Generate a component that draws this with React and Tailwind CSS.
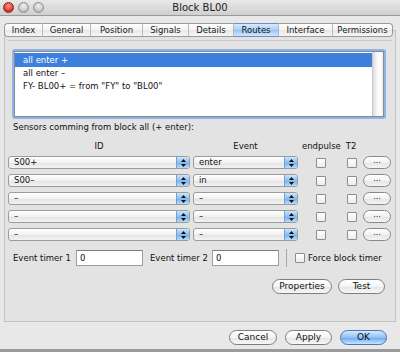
import React from "react";

const font = { fontFamily: '"DejaVu Sans", "Liberation Sans", sans-serif' };

function Arrows() {
  return (
    <svg width="7" height="10" viewBox="0 0 7 10">
      <path d="M1 4 L3.5 1 L6 4 Z" fill="#111" />
      <path d="M1 6 L3.5 9 L6 6 Z" fill="#111" />
    </svg>
  );
}

function Combo({ value, w }) {
  return (
    <div
      className={`${w} h-[13px] flex border border-[#9c9c9c] rounded-[3px] overflow-hidden bg-[linear-gradient(to_bottom,#ffffff,#f1f1f1_50%,#e3e3e3_51%,#f3f3f3)]`}
    >
      <div className="flex-1 flex items-center pl-[5px] text-[8.5px] text-[#111] leading-none">{value}</div>
      <div className="w-[13px] flex items-center justify-center border-l border-[#7d9ccc] bg-[linear-gradient(to_bottom,#cfe5fb,#88c0f3_50%,#6fb1f0_51%,#b8dbfb)]">
        <Arrows />
      </div>
    </div>
  );
}

function Check({ className = "" }) {
  return (
    <div className={`w-[10px] h-[10px] border border-[#8e8e8e] rounded-[1px] bg-[linear-gradient(to_bottom,#ffffff,#ececec)] ${className}`} />
  );
}

function Pill({ children, w, blue = false }) {
  return (
    <div
      className={`${w} h-[15px] rounded-full border flex items-center justify-center text-[9px] leading-none text-[#111] ${
        blue
          ? "border-[#4d73b0] bg-[linear-gradient(to_bottom,#d4e8fc,#8ec2f3_50%,#64a8ee_51%,#c6e4ff)]"
          : "border-[#7e7e7e] bg-[linear-gradient(to_bottom,#ffffff,#f4f4f4_50%,#e6e6e6_51%,#f7f7f7)]"
      }`}
    >
      {children}
    </div>
  );
}

const tabs = ["Index", "General", "Position", "Signals", "Details", "Routes", "Interface", "Permissions"];

const tabW = {
  Index: "w-[39px]",
  General: "w-[48px]",
  Position: "w-[52px]",
  Signals: "w-[46px]",
  Details: "w-[45px]",
  Routes: "w-[45px]",
  Interface: "w-[54px]",
  Permissions: "w-[60px]",
};

const rows = [
  ["S00+", "enter"],
  ["S00–", "in"],
  ["–", "–"],
  ["–", "–"],
  ["–", "–"],
];

export default function App() {
  return (
    <div className="w-[400px] h-[352px] bg-[#e8e8e8] flex flex-col overflow-hidden" style={font}>
      {/* Title bar */}
      <div className="h-[16px] flex items-center border-b border-[#9a9a9a] bg-[linear-gradient(to_bottom,#e9e9e9,#cfcfcf)]">
        <div className="flex items-center gap-[4px] pl-[3px]">
          <div className="w-[11px] h-[11px] rounded-full bg-[radial-gradient(circle_at_50%_35%,#ff9c8c,#e0392b_60%,#a41a10)] border border-[#8c2a22]" />
          <div className="w-[11px] h-[11px] rounded-full bg-[radial-gradient(circle_at_50%_35%,#f2f2f2,#c8c8c8_60%,#9c9c9c)] border border-[#8e8e8e]" />
          <div className="w-[11px] h-[11px] rounded-full bg-[radial-gradient(circle_at_50%_35%,#f2f2f2,#c8c8c8_60%,#9c9c9c)] border border-[#8e8e8e]" />
        </div>
        <div className="flex-1 text-center text-[10px] text-[#222] pr-[44px] leading-none">Block BL00</div>
      </div>

      {/* Tabs */}
      <div className="mt-[7px] h-[14px] pl-[4px] flex relative z-10 -mb-[7px]">
        {tabs.map((t, i) => {
          const sel = t === "Routes";
          return (
            <div
              key={t}
              className={`${tabW[t]} h-[14px] flex items-center justify-center text-[8.5px] leading-none text-[#1a1a1a] border-y border-[#9a9a9a] ${
                i === 0 ? "border-l rounded-l-[4px]" : ""
              } ${i === tabs.length - 1 ? "border-r rounded-r-[4px]" : "border-r border-r-[#b8b8b8]"} ${
                sel
                  ? "bg-[linear-gradient(to_bottom,#d9ebfc,#a9d0f5_50%,#94c4f2_51%,#d3e9fd)] border-y-[#6c8fc4]"
                  : "bg-[linear-gradient(to_bottom,#ffffff,#f3f3f3_50%,#e8e8e8_51%,#f6f6f6)]"
              }`}
            >
              {t}
            </div>
          );
        })}
      </div>

      {/* Panel */}
      <div className="ml-[4px] w-[392px] h-[292px] border border-[#c3c3c3] bg-[#e3e3e3] flex flex-col">
        <div className="mt-[9px] mx-[3px] h-px bg-[#c9c9c9]" />

        {/* List box */}
        <div className="mt-[8px] ml-[7px] w-[374px] h-[70px] border-2 border-[#8db4e8] rounded-[3px]">
          <div className="h-full border border-[#8a8a8a] bg-white flex">
            <div className="flex-1 flex flex-col pt-px text-[8.5px] leading-none text-[#111]">
              <div className="h-[14px] flex items-center pl-[8px] bg-[#3d7fdd] text-white">all enter +</div>
              <div className="h-[13px] flex items-center pl-[8px]">all enter –</div>
              <div className="h-[13px] flex items-center pl-[8px]">FY- BL00+ = from "FY" to "BL00"</div>
            </div>
            <div className="w-[11px] border-l border-[#c8c8c8] bg-[linear-gradient(to_right,#dcdcdc,#f7f7f7_40%,#ffffff_70%,#ececec)]" />
          </div>
        </div>

        {/* Label */}
        <div className="mt-[2px] h-[12px] pl-[8px] flex items-center text-[8.5px] leading-none text-[#111]">
          Sensors comming from block all (+ enter):
        </div>

        {/* Headers */}
        <div className="mt-[7px] h-[12px] flex items-center text-[8.5px] leading-none text-[#111]">
          <div className="ml-[3px] w-[182px] text-center">ID</div>
          <div className="ml-[3px] w-[105px] text-center">Event</div>
          <div className="ml-[4px] w-[38px] text-center">endpulse</div>
          <div className="ml-[4px] w-[14px] text-center">T2</div>
        </div>

        {/* Rows */}
        <div className="mt-[4px] flex flex-col gap-[5px]">
          {rows.map(([id, ev], i) => (
            <div key={i} className="h-[13px] flex items-center">
              <div className="ml-[3px]">
                <Combo value={id} w="w-[182px]" />
              </div>
              <div className="ml-[3px]">
                <Combo value={ev} w="w-[105px]" />
              </div>
              <Check className="ml-[18px]" />
              <Check className="ml-[21px]" />
              <div className="ml-[6px] w-[28px] h-[13px] rounded-full border border-[#8a8a8a] bg-[linear-gradient(to_bottom,#ffffff,#f2f2f2_50%,#e4e4e4_51%,#f5f5f5)] flex items-center justify-center text-[8px] leading-none text-[#222] pb-[3px]">
                ...
              </div>
            </div>
          ))}
        </div>

        {/* Timers */}
        <div className="mt-[9px] h-[16px] flex items-center text-[8.5px] leading-none text-[#111]">
          <div className="ml-[8px] w-[63px]">Event timer 1</div>
          <div className="w-[67px] h-[16px] bg-white border border-[#9e9e9e] border-t-[#7c7c7c] flex items-center pl-[3px]">0</div>
          <div className="ml-[7px] w-[62px]">Event timer 2</div>
          <div className="w-[67px] h-[16px] bg-white border border-[#9e9e9e] border-t-[#7c7c7c] flex items-center pl-[3px]">0</div>
          <div className="ml-[7px] w-px h-[18px] bg-[#a8a8a8]" />
          <Check className="ml-[8px]" />
          <div className="ml-[3px]">Force block timer</div>
        </div>

        {/* Properties / Test */}
        <div className="mt-[13px] flex justify-end gap-[6px] pr-[10px]">
          <Pill w="w-[60px]">Properties</Pill>
          <Pill w="w-[47px]">Test</Pill>
        </div>
      </div>

      {/* Bottom buttons */}
      <div className="mt-[8px] flex justify-end gap-[8px] pr-[13px]">
        <Pill w="w-[48px]">Cancel</Pill>
        <Pill w="w-[47px]">Apply</Pill>
        <Pill w="w-[47px]" blue>
          OK
        </Pill>
      </div>
      <div className="flex-1" />
      <div className="h-[3px] bg-[#9b9b9b]" />
    </div>
  );
}
